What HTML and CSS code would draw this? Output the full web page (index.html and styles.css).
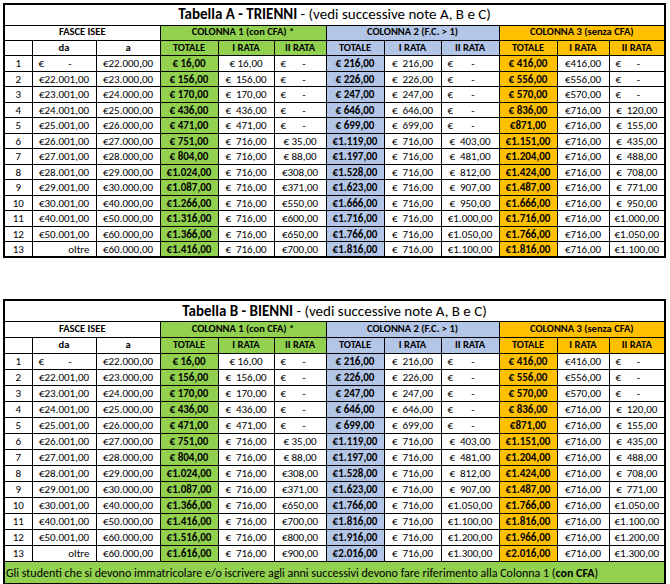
FILE: index.html
```html
<!DOCTYPE html>
<html lang="it">
<head>
<meta charset="utf-8">
<title>Tabelle tasse</title>
<link rel="stylesheet" href="styles.css">
</head>
<body>
<table class="t ta">
<colgroup><col class="c-n"><col class="c-da"><col class="c-a"><col class="c-t1"><col class="c-i1"><col class="c-ii1"><col class="c-t2"><col class="c-i2"><col class="c-ii2"><col class="c-t3"><col class="c-i3"><col class="c-ii3"></colgroup>
<tr class="title"><td colspan="12"><b>Tabella A - TRIENNI</b> - (vedi successive note A, B e C)</td></tr>
<tr class="hd"><td colspan="3">FASCE ISEE</td><td colspan="3" class="g">COLONNA 1 (con CFA) *</td><td colspan="3" class="b">COLONNA 2 (F.C. &gt; 1)</td><td colspan="3" class="o">COLONNA 3 (senza CFA)</td></tr>
<tr class="hd"><td></td><td>da</td><td>a</td><td class="g">TOTALE</td><td class="g">I RATA</td><td class="g">II RATA</td><td class="b">TOTALE</td><td class="b">I RATA</td><td class="b">II RATA</td><td class="o">TOTALE</td><td class="o">I RATA</td><td class="o">II RATA</td></tr>
<tr><td>1</td><td class="dash"><span class="hy">-</span>€</td><td>€22.000,00</td><td class="tg">€ 16,00</td><td>€ 16,00</td><td class="dash d1"><span class="hy">-</span>€</td><td class="tb">€ 216,00</td><td>€  216,00</td><td class="dash"><span class="hy">-</span>€</td><td class="to">€ 416,00</td><td>€416,00</td><td class="dash"><span class="hy">-</span>€</td></tr>
<tr><td>2</td><td>€22.001,00</td><td>€23.000,00</td><td class="tg">€ 156,00</td><td>€  156,00</td><td class="dash d1"><span class="hy">-</span>€</td><td class="tb">€ 226,00</td><td>€  226,00</td><td class="dash"><span class="hy">-</span>€</td><td class="to">€ 556,00</td><td>€556,00</td><td class="dash"><span class="hy">-</span>€</td></tr>
<tr><td>3</td><td>€23.001,00</td><td>€24.000,00</td><td class="tg">€ 170,00</td><td>€  170,00</td><td class="dash d1"><span class="hy">-</span>€</td><td class="tb">€ 247,00</td><td>€  247,00</td><td class="dash"><span class="hy">-</span>€</td><td class="to">€ 570,00</td><td>€570,00</td><td class="dash"><span class="hy">-</span>€</td></tr>
<tr><td>4</td><td>€24.001,00</td><td>€25.000,00</td><td class="tg">€ 436,00</td><td>€  436,00</td><td class="dash d1"><span class="hy">-</span>€</td><td class="tb">€ 646,00</td><td>€  646,00</td><td class="dash"><span class="hy">-</span>€</td><td class="to">€ 836,00</td><td>€716,00</td><td>€  120,00</td></tr>
<tr><td>5</td><td>€25.001,00</td><td>€26.000,00</td><td class="tg">€ 471,00</td><td>€  471,00</td><td class="dash d1"><span class="hy">-</span>€</td><td class="tb">€ 699,00</td><td>€  699,00</td><td class="dash"><span class="hy">-</span>€</td><td class="to">€871,00</td><td>€716,00</td><td>€  155,00</td></tr>
<tr><td>6</td><td>€26.001,00</td><td>€27.000,00</td><td class="tg">€ 751,00</td><td>€  716,00</td><td>€ 35,00</td><td class="tb">€1.119,00</td><td>€  716,00</td><td>€  403,00</td><td class="to">€1.151,00</td><td>€716,00</td><td>€  435,00</td></tr>
<tr><td>7</td><td>€27.001,00</td><td>€28.000,00</td><td class="tg">€ 804,00</td><td>€  716,00</td><td>€ 88,00</td><td class="tb">€1.197,00</td><td>€  716,00</td><td>€  481,00</td><td class="to">€1.204,00</td><td>€716,00</td><td>€  488,00</td></tr>
<tr><td>8</td><td>€28.001,00</td><td>€29.000,00</td><td class="tg">€1.024,00</td><td>€  716,00</td><td>€308,00</td><td class="tb">€1.528,00</td><td>€  716,00</td><td>€  812,00</td><td class="to">€1.424,00</td><td>€716,00</td><td>€  708,00</td></tr>
<tr><td>9</td><td>€29.001,00</td><td>€30.000,00</td><td class="tg">€1.087,00</td><td>€  716,00</td><td>€371,00</td><td class="tb">€1.623,00</td><td>€  716,00</td><td>€  907,00</td><td class="to">€1.487,00</td><td>€716,00</td><td>€  771,00</td></tr>
<tr><td>10</td><td>€30.001,00</td><td>€40.000,00</td><td class="tg">€1.266,00</td><td>€  716,00</td><td>€550,00</td><td class="tb">€1.666,00</td><td>€  716,00</td><td>€  950,00</td><td class="to">€1.666,00</td><td>€716,00</td><td>€  950,00</td></tr>
<tr><td>11</td><td>€40.001,00</td><td>€50.000,00</td><td class="tg">€1.316,00</td><td>€  716,00</td><td>€600,00</td><td class="tb">€1.716,00</td><td>€  716,00</td><td>€1.000,00</td><td class="to">€1.716,00</td><td>€716,00</td><td>€1.000,00</td></tr>
<tr><td>12</td><td>€50.001,00</td><td>€60.000,00</td><td class="tg">€1.366,00</td><td>€  716,00</td><td>€650,00</td><td class="tb">€1.766,00</td><td>€  716,00</td><td>€1.050,00</td><td class="to">€1.766,00</td><td>€716,00</td><td>€1.050,00</td></tr>
<tr><td>13</td><td class="oltre">oltre</td><td>€60.000,00</td><td class="tg">€1.416,00</td><td>€  716,00</td><td>€700,00</td><td class="tb">€1.816,00</td><td>€  716,00</td><td>€1.100,00</td><td class="to">€1.816,00</td><td>€716,00</td><td>€1.100,00</td></tr>
</table>

<table class="t tbl-b">
<colgroup><col class="c-n"><col class="c-da"><col class="c-a"><col class="c-t1"><col class="c-i1"><col class="c-ii1"><col class="c-t2"><col class="c-i2"><col class="c-ii2"><col class="c-t3"><col class="c-i3"><col class="c-ii3"></colgroup>
<tr class="title"><td colspan="12"><b>Tabella B - BIENNI</b> - (vedi successive note A, B e C)</td></tr>
<tr class="hd"><td colspan="3">FASCE ISEE</td><td colspan="3" class="g">COLONNA 1 (con CFA) *</td><td colspan="3" class="b">COLONNA 2 (F.C. &gt; 1)</td><td colspan="3" class="o">COLONNA 3 (senza CFA)</td></tr>
<tr class="hd"><td></td><td>da</td><td>a</td><td class="g">TOTALE</td><td class="g">I RATA</td><td class="g">II RATA</td><td class="b">TOTALE</td><td class="b">I RATA</td><td class="b">II RATA</td><td class="o">TOTALE</td><td class="o">I RATA</td><td class="o">II RATA</td></tr>
<tr><td>1</td><td class="dash"><span class="hy">-</span>€</td><td>€22.000,00</td><td class="tg">€ 16,00</td><td>€ 16,00</td><td class="dash d1"><span class="hy">-</span>€</td><td class="tb">€ 216,00</td><td>€  216,00</td><td class="dash"><span class="hy">-</span>€</td><td class="to">€ 416,00</td><td>€416,00</td><td class="dash"><span class="hy">-</span>€</td></tr>
<tr><td>2</td><td>€22.001,00</td><td>€23.000,00</td><td class="tg">€ 156,00</td><td>€  156,00</td><td class="dash d1"><span class="hy">-</span>€</td><td class="tb">€ 226,00</td><td>€  226,00</td><td class="dash"><span class="hy">-</span>€</td><td class="to">€ 556,00</td><td>€556,00</td><td class="dash"><span class="hy">-</span>€</td></tr>
<tr><td>3</td><td>€23.001,00</td><td>€24.000,00</td><td class="tg">€ 170,00</td><td>€  170,00</td><td class="dash d1"><span class="hy">-</span>€</td><td class="tb">€ 247,00</td><td>€  247,00</td><td class="dash"><span class="hy">-</span>€</td><td class="to">€ 570,00</td><td>€570,00</td><td class="dash"><span class="hy">-</span>€</td></tr>
<tr><td>4</td><td>€24.001,00</td><td>€25.000,00</td><td class="tg">€ 436,00</td><td>€  436,00</td><td class="dash d1"><span class="hy">-</span>€</td><td class="tb">€ 646,00</td><td>€  646,00</td><td class="dash"><span class="hy">-</span>€</td><td class="to">€ 836,00</td><td>€716,00</td><td>€  120,00</td></tr>
<tr><td>5</td><td>€25.001,00</td><td>€26.000,00</td><td class="tg">€ 471,00</td><td>€  471,00</td><td class="dash d1"><span class="hy">-</span>€</td><td class="tb">€ 699,00</td><td>€  699,00</td><td class="dash"><span class="hy">-</span>€</td><td class="to">€871,00</td><td>€716,00</td><td>€  155,00</td></tr>
<tr><td>6</td><td>€26.001,00</td><td>€27.000,00</td><td class="tg">€ 751,00</td><td>€  716,00</td><td>€ 35,00</td><td class="tb">€1.119,00</td><td>€  716,00</td><td>€  403,00</td><td class="to">€1.151,00</td><td>€716,00</td><td>€  435,00</td></tr>
<tr><td>7</td><td>€27.001,00</td><td>€28.000,00</td><td class="tg">€ 804,00</td><td>€  716,00</td><td>€ 88,00</td><td class="tb">€1.197,00</td><td>€  716,00</td><td>€  481,00</td><td class="to">€1.204,00</td><td>€716,00</td><td>€  488,00</td></tr>
<tr><td>8</td><td>€28.001,00</td><td>€29.000,00</td><td class="tg">€1.024,00</td><td>€  716,00</td><td>€308,00</td><td class="tb">€1.528,00</td><td>€  716,00</td><td>€  812,00</td><td class="to">€1.424,00</td><td>€716,00</td><td>€  708,00</td></tr>
<tr><td>9</td><td>€29.001,00</td><td>€30.000,00</td><td class="tg">€1.087,00</td><td>€  716,00</td><td>€371,00</td><td class="tb">€1.623,00</td><td>€  716,00</td><td>€  907,00</td><td class="to">€1.487,00</td><td>€716,00</td><td>€  771,00</td></tr>
<tr><td>10</td><td>€30.001,00</td><td>€40.000,00</td><td class="tg">€1.366,00</td><td>€  716,00</td><td>€650,00</td><td class="tb">€1.766,00</td><td>€  716,00</td><td>€1.050,00</td><td class="to">€1.766,00</td><td>€716,00</td><td>€1.050,00</td></tr>
<tr><td>11</td><td>€40.001,00</td><td>€50.000,00</td><td class="tg">€1.416,00</td><td>€  716,00</td><td>€700,00</td><td class="tb">€1.816,00</td><td>€  716,00</td><td>€1.100,00</td><td class="to">€1.816,00</td><td>€716,00</td><td>€1.100,00</td></tr>
<tr><td>12</td><td>€50.001,00</td><td>€60.000,00</td><td class="tg">€1.516,00</td><td>€  716,00</td><td>€800,00</td><td class="tb">€1.916,00</td><td>€  716,00</td><td>€1.200,00</td><td class="to">€1.966,00</td><td>€716,00</td><td>€1.200,00</td></tr>
<tr><td>13</td><td class="oltre">oltre</td><td>€60.000,00</td><td class="tg">€1.616,00</td><td>€  716,00</td><td>€900,00</td><td class="tb">€2.016,00</td><td>€  716,00</td><td>€1.300,00</td><td class="to">€2.016,00</td><td>€716,00</td><td>€1.300,00</td></tr>
<tr class="note"><td colspan="12">Gli studenti che si devono immatricolare e/o iscrivere agli anni successivi devono fare riferimento alla Colonna 1 (<b>con CFA</b>)</td></tr>
</table>
</body>
</html>
```
FILE: styles.css
```css
html, body {
  margin: 0;
  padding: 0;
  background: #fff;
}
body {
  font-family: "Carlito", "Lato", "Open Sans", sans-serif;
  color: #000;
}
.t {
  border-collapse: collapse;
  table-layout: fixed;
  width: 661px;
  margin: 3px 0 0 3px;
  border: 2px solid #000;
}
.tbl-b {
  margin-top: 41px;
}
.c-n { width: 28px; }
.c-da { width: 64px; }
.c-a { width: 64px; }
.c-t1 { width: 58px; }
.c-i1 { width: 56px; }
.c-ii1 { width: 52px; }
.c-t2 { width: 58px; }
.c-i2 { width: 57px; }
.c-ii2 { width: 58px; }
.c-t3 { width: 58px; }
.c-i3 { width: 52px; }
.c-ii3 { width: 56px; }

.t td {
  border: 1px solid #000;
  padding: 0;
  text-align: center;
  white-space: pre;
  font-size: 11px;
  line-height: 1;
  overflow: hidden;
}
.ta tr { height: 15.5px; }
.ta tr.title { height: 21px; }
.ta tr.hd { height: 15.4px; }
.tbl-b tr { height: 16px; }
.tbl-b tr.title { height: 21px; }
.tbl-b tr.hd { height: 16.3px; }

.t tr.title td {
  font-size: 15px;
  white-space: normal;
}
.t tr.hd td {
  font-weight: 700;
  font-size: 10.5px;
}
.g { background: #92d050; }
.b { background: #b4c6e7; }
.o { background: #ffc000; }
.tg, .tb, .to { font-weight: 700; }
.tg { background: #92d050; }
.tb { background: #b4c6e7; }
.to { background: #ffc000; }

.t td.dash {
  text-align: left;
  padding-left: 6px;
}
.dash .hy {
  float: right;
  margin-right: 24px;
}
.dash.d1 .hy {
  margin-right: 20px;
}
.t td.oltre {
  text-align: right;
  padding-right: 6px;
}
.t tr.note {
  height: 22px;
}
.t tr.note td {
  background: #92d050;
  text-align: left;
  white-space: nowrap;
  font-size: 12px;
  padding-left: 1px;
}
```
